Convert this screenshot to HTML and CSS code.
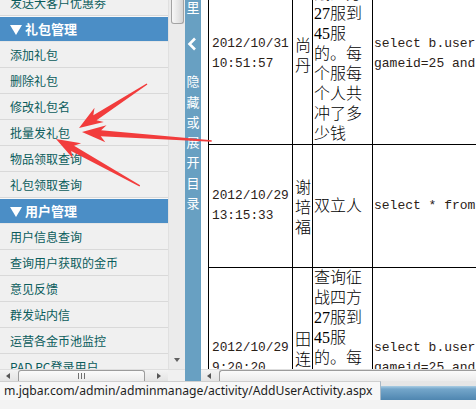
FILE: index.html
```html
<!DOCTYPE html>
<html lang="zh-CN">
<head>
<meta charset="utf-8">
<title>后台管理</title>
<link rel="stylesheet" href="styles.css">
</head>
<body>
<div class="screen">
  <div class="frames">
    <div class="sidebar">
      <div class="side-main">
        <div class="menu">
          <div class="menu-inner">
            <div class="item">发送大客户优惠劵</div>
            <div class="group"><span class="tri"></span>礼包管理</div>
            <div class="item">添加礼包</div>
            <div class="item">删除礼包</div>
            <div class="item">修改礼包名</div>
            <div class="item">批量发礼包</div>
            <div class="item">物品领取查询</div>
            <div class="item">礼包领取查询</div>
            <div class="group"><span class="tri"></span>用户管理</div>
            <div class="item">用户信息查询</div>
            <div class="item">查询用户获取的金币</div>
            <div class="item">意见反馈</div>
            <div class="item">群发站内信</div>
            <div class="item">运营各金币池监控</div>
            <div class="item">PAD PC登录用户</div>
          </div>
        </div>
        <div class="vscroll">
          <div class="vthumb"></div>
          <div class="vdown"></div>
        </div>
      </div>
      <div class="hscroll">
        <span class="arr-l"></span>
        <div class="hthumb side-thumb"><span class="grip"></span></div>
        <span class="arr-r"></span>
        <span class="corner"></span>
      </div>
    </div>
    <div class="toggle">
      <span class="tch first">里</span>
      <svg class="chev" width="10" height="14" viewBox="0 0 10 14"><polyline points="8,1.5 2.5,7 8,12.5" fill="none" stroke="#fff" stroke-width="2.6"/></svg>
      <span class="tch gap">隐</span>
      <span class="tch">藏</span>
      <span class="tch">或</span>
      <span class="tch">展</span>
      <span class="tch">开</span>
      <span class="tch">目</span>
      <span class="tch">录</span>
    </div>
    <div class="content">
      <div class="content-view">
        <table class="grid">
          <colgroup><col class="c-date"><col class="c-name"><col class="c-desc"><col class="c-sql"></colgroup>
          <tr>
            <td class="date">2012/10/31 10:51:57</td>
            <td class="name">尚丹</td>
            <td class="desc">查询征战四方27服到45服的。每个服每个人共冲了多少钱</td>
            <td class="sql">select b.username,sum(a.money) from paylog a,userinfo b where<br>gameid=25 and serverid between 27 and 45 group by b.username</td>
          </tr>
          <tr class="r2">
            <td class="date">2012/10/29 13:15:33</td>
            <td class="name">谢培福</td>
            <td class="desc">双立人</td>
            <td class="sql">select * from userinfo where username='双立人'</td>
          </tr>
          <tr>
            <td class="date">2012/10/29 9:20:20</td>
            <td class="name">田连生</td>
            <td class="desc">查询征战四方27服到45服的。每个服每个人共冲了多少钱</td>
            <td class="sql">select b.username,sum(a.money) from paylog a,userinfo b where<br>gameid=25 and serverid between 27 and 45 group by b.username</td>
          </tr>
        </table>
      </div>
      <div class="hscroll main-h">
        <span class="arr-l"></span>
        <div class="hthumb main-thumb"></div>
      </div>
    </div>
  </div>
  <div class="status">
    <div class="url">m.jqbar.com/admin/adminmanage/activity/AddUserActivity.aspx</div>
    <div class="sfill"></div>
  </div>
  <div class="bottom"></div>
  <svg class="arrows" width="476" height="409" viewBox="0 0 476 409">
    <g fill="#f23c3c">
      <path transform="translate(79 128) rotate(-32.9)" d="M0 0 L24 -8.5 L19 -3 L81 -0.7 L81 0.7 L19 3 L24 8.5 Z"/>
      <path transform="translate(82 132) rotate(3.96)" d="M0 0 L24 -8.5 L19 -3 L130 -0.7 L130 0.7 L19 3 L24 8.5 Z"/>
      <path transform="translate(56 139) rotate(29.2)" d="M0 0 L24 -8.5 L19 -3 L96 -0.7 L96 0.7 L19 3 L24 8.5 Z"/>
    </g>
  </svg>
</div>
</body>
</html>
```

FILE: styles.css
```css
html, body {
  margin: 0;
  padding: 0;
  background: #fff;
}

.screen {
  position: relative;
  width: 476px;
  height: 409px;
  overflow: hidden;
}

.frames {
  display: flex;
  height: 381px;
}

/* ---------- sidebar ---------- */
.sidebar {
  width: 185px;
  display: flex;
  flex-direction: column;
  background: #f0f0f0;
}

.side-main {
  flex: 1;
  display: flex;
  min-height: 0;
  overflow: hidden;
}

.menu {
  width: 168px;
  overflow: hidden;
}

.menu-inner {
  margin-top: -10px;
}

.item {
  height: 25px;
  line-height: 25px;
  border-bottom: 1px solid #d9d9d9;
  padding-left: 10px;
  font-family: "Noto Sans CJK SC", sans-serif;
  font-size: 12px;
  color: #0a5c5c;
  white-space: nowrap;
}

.group {
  height: 24px;
  line-height: 24px;
  border-top: 1px solid #f8f8f8;
  border-bottom: 1px solid #e6e6e6;
  background: #4b8ec6;
  padding-left: 10px;
  font-family: "Noto Sans CJK SC", sans-serif;
  font-size: 13px;
  font-weight: bold;
  color: #fff;
  white-space: nowrap;
  display: flex;
  align-items: center;
}

.tri {
  width: 0;
  height: 0;
  border-left: 6px solid transparent;
  border-right: 6px solid transparent;
  border-top: 10px solid #fff;
  margin-right: 3px;
  margin-top: 1px;
}

.vscroll {
  width: 17px;
  box-sizing: border-box;
  background: #ebebeb;
  border-left: 1px solid #e0e0e0;
  display: flex;
  flex-direction: column;
  align-items: center;
}

.vthumb {
  width: 13px;
  height: 24px;
  box-sizing: border-box;
  margin-left: 1px;
  border: 1px solid #a3a3a3;
  border-top: none;
  border-radius: 0 0 3px 3px;
  background: linear-gradient(to right, #f7f7f7, #e6e6e6 55%, #d4d4d4);
}

.vdown {
  margin-top: auto;
  margin-bottom: 7px;
  width: 0;
  height: 0;
  border-left: 3.5px solid transparent;
  border-right: 3.5px solid transparent;
  border-top: 4px solid #606060;
}

/* ---------- scrollbars ---------- */
.hscroll {
  height: 12px;
  box-sizing: border-box;
  display: flex;
  align-items: flex-start;
  overflow: hidden;
  background: linear-gradient(#f3f3f3, #e4e4e4);
  border-top: 1px solid #dedede;
}

.arr-l {
  width: 0;
  height: 0;
  margin: 3px 0 0 6px;
  border-top: 3.5px solid transparent;
  border-bottom: 3.5px solid transparent;
  border-right: 4px solid #555;
}

.arr-r {
  width: 0;
  height: 0;
  margin: 3px 0 0 12px;
  border-top: 3.5px solid transparent;
  border-bottom: 3.5px solid transparent;
  border-left: 4px solid #555;
}

.hthumb {
  height: 14px;
  box-sizing: border-box;
  border: 1px solid #9c9c9c;
  border-bottom: none;
  border-radius: 3px 3px 0 0;
  background: linear-gradient(#fbfbfb, #e7e7e7);
  display: flex;
  justify-content: center;
  padding-top: 2px;
}

.side-thumb {
  width: 127px;
  margin-left: 8px;
}

.grip {
  width: 8px;
  height: 6px;
  background: linear-gradient(to right, #707070 1px, transparent 1px);
  background-size: 3px 100%;
}

.corner {
  margin-left: auto;
  width: 17px;
  height: 12px;
  background: #f0f0f0;
}

.main-thumb {
  flex: 1;
  margin-left: 8px;
  border-right: none;
  border-radius: 3px 0 0 0;
}

/* ---------- toggle strip ---------- */
.toggle {
  width: 16px;
  background: #68a0c2;
  display: flex;
  flex-direction: column;
  align-items: center;
  font-family: "Noto Sans CJK SC", sans-serif;
  font-size: 13px;
  color: #fff;
}

.tch {
  display: block;
  line-height: 20.3px;
}

.tch.first {
  margin-top: -3px;
}

.chev {
  display: block;
  margin-top: 20px;
  margin-left: -3px;
}

.tch.gap {
  margin-top: 20px;
}

/* ---------- content ---------- */
.content {
  flex: 1;
  min-width: 0;
  display: flex;
  flex-direction: column;
  background: #fff;
}

.content-view {
  flex: 1;
  min-height: 0;
  overflow: hidden;
  padding-left: 7px;
}

.grid {
  border-collapse: collapse;
  table-layout: fixed;
  width: 700px;
  margin-top: -37px;
  font-size: 16px;
  line-height: 20px;
  color: #000;
}

.c-date { width: 84px; }
.c-name { width: 20px; }
.c-desc { width: 60px; }
.c-sql { width: 536px; }

.grid td {
  border: 1px solid #000;
  padding: 0 1px;
  vertical-align: middle;
}

.grid td.date {
  font-family: "Liberation Mono", monospace;
  font-size: 12.8px;
  color: #2b2118;
  padding-left: 3px;
}

.grid td.name {
  font-family: "Noto Sans CJK SC", sans-serif;
  font-weight: 300;
  padding-left: 2px;
}

.grid td.desc {
  font-family: "Liberation Serif", "Noto Sans CJK SC", serif;
  font-weight: 300;
}

.grid td.sql {
  font-family: "Liberation Mono", "Noto Sans CJK SC", monospace;
  font-size: 13px;
  color: #2b2118;
  white-space: nowrap;
  overflow: hidden;
}

.r2 td {
  height: 122px;
}

/* ---------- status ---------- */
.status {
  display: flex;
  height: 19px;
}

.url {
  width: 381px;
  box-sizing: border-box;
  background: #f7f7f7;
  border-top: 1px solid #cfcfcf;
  border-right: 1px solid #a9b9c6;
  padding-left: 4px;
  font-family: "Noto Sans", sans-serif;
  font-size: 12.2px;
  line-height: 17px;
  color: #1e1e1e;
  white-space: nowrap;
  overflow: hidden;
}

.sfill {
  flex: 1;
  background: linear-gradient(#e6e6e6 0, #e6e6e6 5px, #a9cde4 5px, #74a6ca 8px, #4f86b0 100%);
}

.bottom {
  height: 9px;
  background: #f3f3f3;
}

.arrows {
  position: absolute;
  left: 0;
  top: 0;
  pointer-events: none;
}
```
